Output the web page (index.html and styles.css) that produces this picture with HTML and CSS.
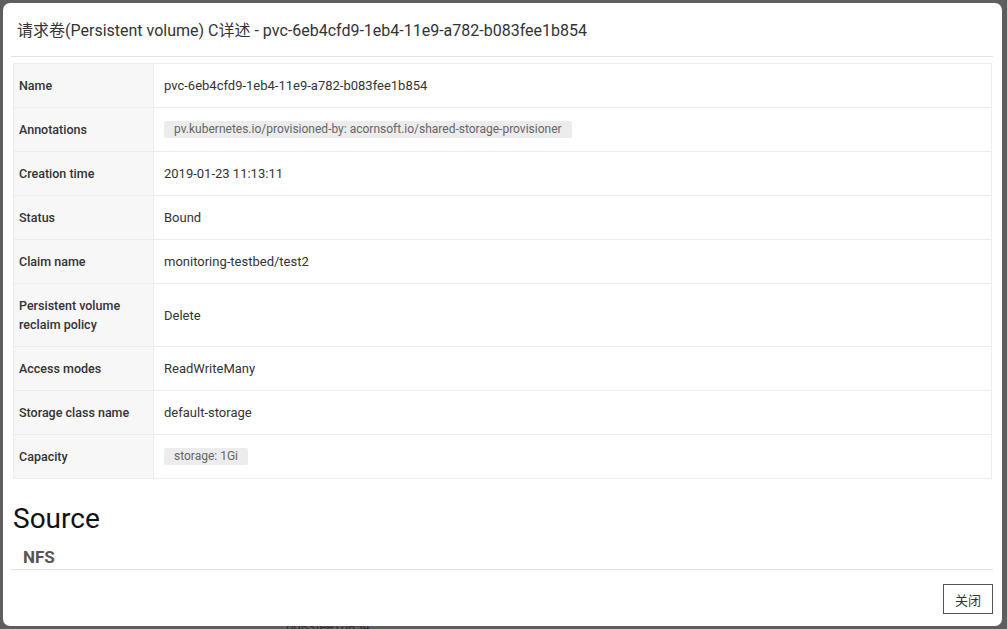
FILE: index.html
```html
<!DOCTYPE html>
<html lang="zh">
<head>
<meta charset="utf-8">
<title>PV detail</title>
<link rel="stylesheet" href="styles.css">
</head>
<body>
<div class="backdrop-text">b083fee1b854</div>
<div class="modal">
  <div class="modal-header">
    <h4 class="modal-title">请求卷(Persistent volume) C详述 - pvc-6eb4cfd9-1eb4-11e9-a782-b083fee1b854</h4>
  </div>
  <div class="modal-body">
    <table class="detail">
      <tr><th>Name</th><td>pvc-6eb4cfd9-1eb4-11e9-a782-b083fee1b854</td></tr>
      <tr><th>Annotations</th><td><span class="chip">pv.kubernetes.io/provisioned-by: acornsoft.io/shared-storage-provisioner</span></td></tr>
      <tr><th>Creation time</th><td>2019-01-23 11:13:11</td></tr>
      <tr><th>Status</th><td>Bound</td></tr>
      <tr><th>Claim name</th><td>monitoring-testbed/test2</td></tr>
      <tr class="tall"><th>Persistent volume<br>reclaim policy</th><td>Delete</td></tr>
      <tr><th>Access modes</th><td>ReadWriteMany</td></tr>
      <tr><th>Storage class name</th><td>default-storage</td></tr>
      <tr><th>Capacity</th><td><span class="chip">storage: 1Gi</span></td></tr>
    </table>
    <h2 class="section-title">Source</h2>
    <h3 class="sub-title">NFS</h3>
  </div>
  <div class="modal-footer">
    <button class="btn">关闭</button>
  </div>
</div>
</body>
</html>
```
FILE: styles.css
```css
html, body {
  margin: 0;
  padding: 0;
}
body {
  background: #5e5e5e;
  width: 1007px;
  height: 629px;
  overflow: hidden;
  position: relative;
  font-family: Roboto, "Noto Sans CJK SC", sans-serif;
  color: #333;
}
.backdrop-text {
  position: absolute;
  left: 286px;
  top: 619px;
  font-size: 13px;
  color: #2e2e2e;
}
.modal {
  position: absolute;
  left: 3px;
  top: 3px;
  width: 999px;
  height: 623px;
  background: #fff;
  border-radius: 7px;
  display: flex;
  flex-direction: column;
  padding: 0 9px 0 8px;
  box-sizing: border-box;
}
.modal-header {
  height: 53px;
  border-bottom: 1px solid #e2e2e2;
  display: flex;
  align-items: center;
  padding-left: 6px;
  flex: none;
}
.modal-title {
  margin: 0;
  font-size: 16px;
  font-weight: 400;
  color: #333;
  position: relative;
  top: -1px;
}
.modal-body {
  flex: 1;
  overflow: hidden;
  padding: 6px 1px 0 2px;
}
.detail {
  width: 100%;
  border-collapse: collapse;
  font-size: 13px;
}
.detail th, .detail td {
  border: 1px solid #ececec;
  height: 44px;
  padding: 0 10px;
  box-sizing: border-box;
  vertical-align: middle;
}
.detail tr.tall th, .detail tr.tall td {
  height: 63px;
}
.detail th {
  width: 140px;
  background: #f7f7f7;
  text-align: left;
  font-weight: 500;
  font-size: 12.5px;
  padding-left: 5px;
  line-height: 19px;
  color: #333;
}
.detail td {
  color: #333;
}
.chip {
  display: inline-block;
  background: #ececec;
  color: #666;
  font-size: 12px;
  line-height: 17px;
  padding: 0 10px;
  border-radius: 2px;
}
.section-title {
  margin: 22px 0 0 0;
  font-size: 28px;
  font-weight: 400;
  color: #111;
  line-height: 36px;
}
.sub-title {
  margin: 10px 0 0 10px;
  font-size: 17px;
  font-weight: 700;
  color: #555;
}
.modal-footer {
  height: 57px;
  border-top: 1px solid #e2e2e2;
  display: flex;
  justify-content: flex-end;
  align-items: center;
  flex: none;
  box-sizing: border-box;
  padding-top: 2px;
}
.btn {
  width: 50px;
  height: 30px;
  border: 1px solid #555;
  background: #fff;
  font-family: "Noto Sans CJK SC", sans-serif;
  font-size: 13px;
  color: #333;
  padding: 0;
  margin-right: 0;
}
```
